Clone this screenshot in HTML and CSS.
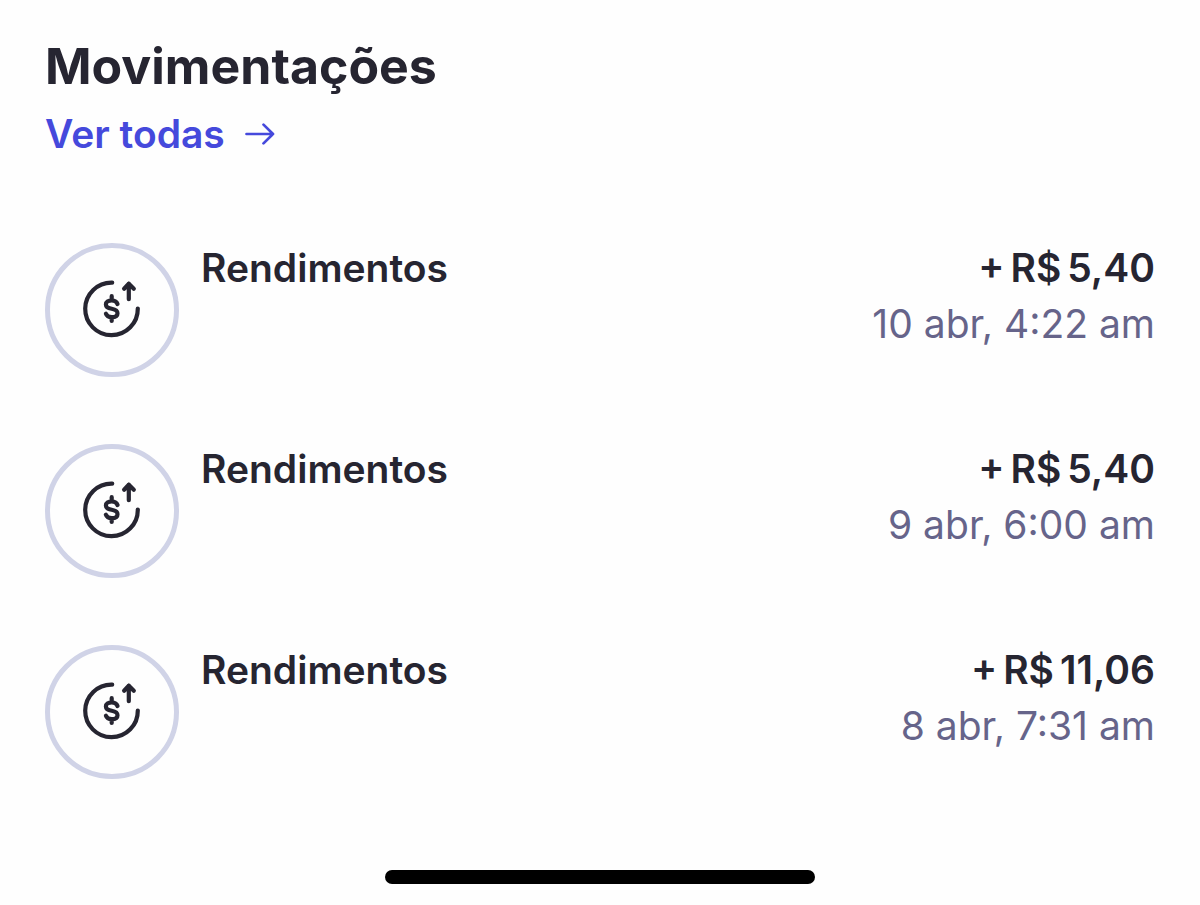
FILE: index.html
```html
<!DOCTYPE html>
<html lang="pt-BR">
<head>
<meta charset="utf-8">
<title>Movimentações</title>
<link rel="stylesheet" href="styles.css">
</head>
<body>
<svg class="defs" width="0" height="0" aria-hidden="true">
  <symbol id="earn" viewBox="0.8 1.8 72 72">
    <path d="M37 10.400A26.300 26.300 0 1 0 62.600 36.300"/>
    <path d="M53.600 27V11.500M48.900 16.500L53.600 11.500L58.600 16.500"/>
    <path d="M42.300 31.800C41.600 29.600 39.500 28.300 36.500 28.300C33 28.300 30.700 29.900 30.700 32.300C30.700 35 33 36 36.500 36.600C40 37.200 42.300 38.500 42.300 41C42.300 43.500 40 45 36.500 45C33.500 45 31.400 43.700 30.700 41.500M36.500 24V28.300M36.500 45V48.800"/>
  </symbol>
</svg>
<main class="screen">
  <header class="head">
    <h1 class="title">Movimentações</h1>
    <a class="link"><span>Ver todas</span><svg class="arrow" viewBox="0 0 30 24"><path d="M1.500 12H28M18.500 2.600L28 12L18.500 21.400"/></svg></a>
  </header>
  <ul class="list">
    <li class="item"><span class="badge"><svg class="icon"><use href="#earn"/></svg></span><span class="name">Rendimentos</span><span class="side"><span class="amount"><span class="sign">+</span><span>R$</span><span>5,40</span></span><span class="date">10 abr, 4:22 am</span></span></li>
    <li class="item"><span class="badge"><svg class="icon"><use href="#earn"/></svg></span><span class="name">Rendimentos</span><span class="side"><span class="amount"><span class="sign">+</span><span>R$</span><span>5,40</span></span><span class="date">9 abr, 6:00 am</span></span></li>
    <li class="item"><span class="badge"><svg class="icon"><use href="#earn"/></svg></span><span class="name">Rendimentos</span><span class="side"><span class="amount"><span class="sign">+</span><span>R$</span><span>11,06</span></span><span class="date">8 abr, 7:31 am</span></span></li>
  </ul>
  <div class="home"></div>
</main>
</body>
</html>
```
FILE: styles.css
```css
* { box-sizing: border-box; }
body { margin: 0; background: #fefefe; color: #262531; font-family: Inter, sans-serif; }
.defs { display: block; }
.screen { height: 905px; padding: 36px 45px 21px; display: flex; flex-direction: column; overflow: hidden; }
.title { margin: 0; font-size: 50px; line-height: 60px; font-weight: 700; }
.link { display: flex; align-items: center; gap: 20.5px; margin-top: 14px; color: #4549dc; font-size: 39px; line-height: 48px; font-weight: 600; }
.arrow { width: 30px; height: 24px; fill: none; stroke: currentColor; stroke-width: 2.7; stroke-linecap: round; stroke-linejoin: round; }
.list { list-style: none; margin: 85px 0 0; padding: 0; display: grid; gap: 67px; }
.item { display: flex; height: 134px; }
.badge { width: 134px; height: 134px; border: 5px solid #d0d3e7; border-radius: 50%; display: grid; place-items: center; }
.icon { width: 72px; height: 72px; fill: none; stroke: #262531; stroke-width: 4.2; stroke-linecap: round; stroke-linejoin: round; }
.name { margin-left: 22px; font-size: 39px; line-height: 50px; font-weight: 600; }
.side { margin-left: auto; display: flex; flex-direction: column; align-items: flex-end; }
.amount { display: flex; gap: 6px; font-size: 39px; line-height: 50px; font-weight: 600; }
.sign { font-feature-settings: "case"; }
.date { margin-top: 4px; font-size: 39px; line-height: 54px; color: #66648a; }
.home { width: 430px; height: 14px; margin: auto auto 0; background: #000; border-radius: 7px; }
```
